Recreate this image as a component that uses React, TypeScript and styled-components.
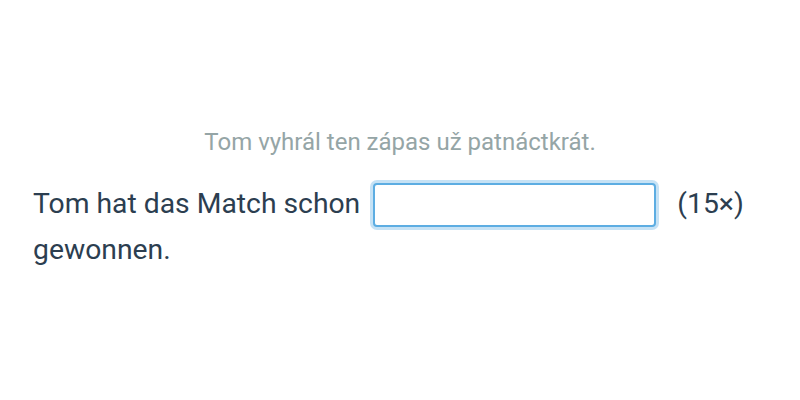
import React from 'react';
import styled, { createGlobalStyle } from 'styled-components';

const GlobalStyle = createGlobalStyle`
  *, *::before, *::after {
    box-sizing: border-box;
  }

  body {
    margin: 0;
    padding: 0;
    font-family: Roboto, 'Liberation Sans', sans-serif;
    background: #fff;
    color: #2c3e50;
  }
`;

const Page = styled.main`
  width: 800px;
  height: 400px;
  padding: 126px 33px 0;
`;

const Hint = styled.p`
  margin: 0 0 23px;
  text-align: center;
  font-size: 24px;
  line-height: 32px;
  color: #95a5a6;
`;

const Sentence = styled.p`
  margin: 0;
  font-size: 28.3px;
  line-height: 46px;
  color: #2c3e50;
`;

const Gap = styled.input`
  display: inline-block;
  vertical-align: middle;
  width: 283px;
  height: 44px;
  margin: -2px 6px 0 6px;
  padding: 0 10px;
  border: 2px solid #5dade2;
  border-radius: 4px;
  box-shadow: 0 0 0 3px rgba(93, 173, 226, 0.35);
  font: inherit;
  color: inherit;
  outline: none;
  background: #fff;
`;

const Count = styled.span`
  margin-left: 8px;
`;

export default function App() {
  return (
    <Page>
      <GlobalStyle />
      <Hint>Tom vyhrál ten zápas už patnáctkrát.</Hint>
      <Sentence>
        Tom hat das Match schon <Gap type="text" aria-label="Antwort" /> <Count>(15×)</Count> gewonnen.
      </Sentence>
    </Page>
  );
}
